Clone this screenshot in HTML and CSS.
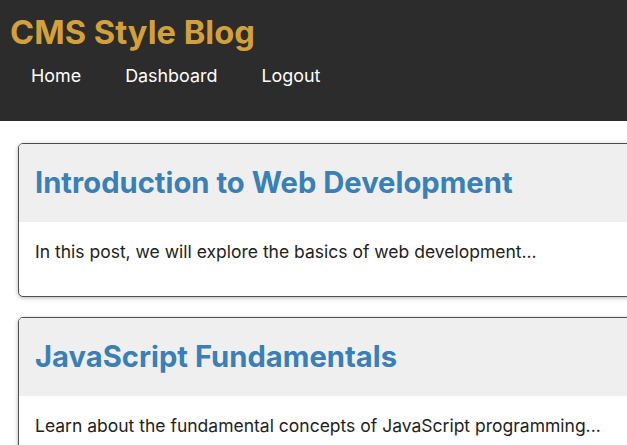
FILE: index.html
```html
<!DOCTYPE html>
<html>
<head>
<meta charset="utf-8">
<link rel="stylesheet" href="styles.css">
</head>
<body>
<header class="site-header">
  <h1 class="site-title">CMS Style Blog</h1>
  <nav class="site-nav">
    <a href="#">Home</a>
    <a href="#">Dashboard</a>
    <a href="#">Logout</a>
  </nav>
</header>
<main class="posts">
  <article class="card">
    <div class="card-header"><h2 class="card-title">Introduction to Web Development</h2></div>
    <div class="card-body"><p>In this post, we will explore the basics of web development...</p></div>
  </article>
  <article class="card">
    <div class="card-header"><h2 class="card-title">JavaScript Fundamentals</h2></div>
    <div class="card-body"><p>Learn about the fundamental concepts of JavaScript programming...</p></div>
  </article>
</main>
</body>
</html>
```
FILE: styles.css
```css
html, body {
  margin: 0;
  padding: 0;
  overflow: hidden;
  background: #ffffff;
  font-family: Inter, "Liberation Sans", Arial, sans-serif;
}
.site-header {
  background: #2c2c2c;
  height: 121px;
  box-sizing: border-box;
  padding: 12px 10px 0 10px;
}
.site-title {
  margin: 0;
  font-size: 32.7px;
  line-height: 40px;
  font-weight: bold;
  color: #d4a03a;
}
.site-nav {
  display: flex;
  gap: 44px;
  padding: 12px 0 0 21px;
}
.site-nav a {
  color: #ffffff;
  text-decoration: none;
  font-size: 17.9px;
  line-height: 24px;
}
.posts {
  display: flex;
  flex-direction: column;
  gap: 20px;
  padding: 22px 0 0 18px;
  width: 760px;
}
.card {
  border: 1px solid #505050;
  border-radius: 5px;
  box-shadow: 0 1px 4px rgba(0,0,0,0.3);
  overflow: hidden;
  background: #fff;
}
.card-header {
  background: #efefef;
  padding: 21px 16px;
}
.card-title {
  margin: 0;
  font-size: 29.2px;
  line-height: 36px;
  font-weight: bold;
  color: #3a7fb6;
}
.card-body {
  padding: 12px 16px 26px;
}
.card-body p {
  margin: 0;
  font-size: 17.5px;
  line-height: 36px;
  color: #222;
}
```
